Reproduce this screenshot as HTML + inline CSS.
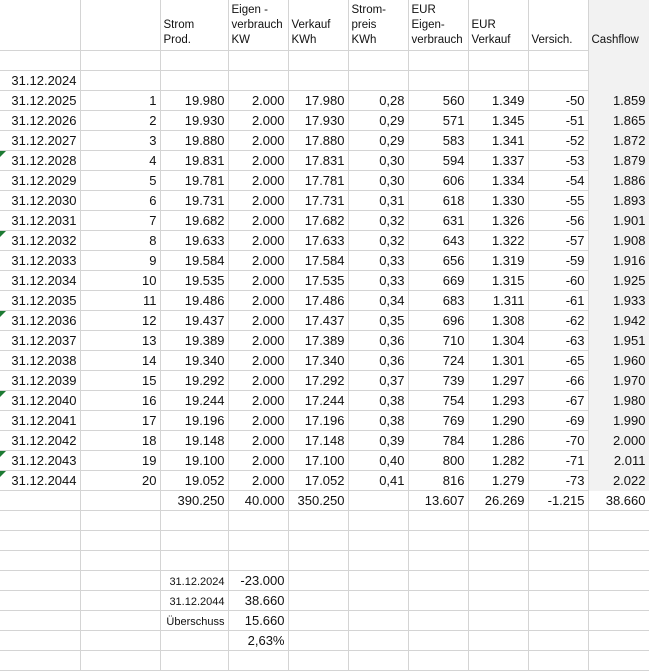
<!DOCTYPE html>
<html><head><meta charset="utf-8"><style>
body{margin:0;background:#fff;font-family:"Liberation Sans",Arial,sans-serif;color:#111;}
table{border-collapse:collapse;table-layout:fixed;position:absolute;left:0;top:0;width:649px;}
td{border-right:1px solid #d4d4d4;border-bottom:1px solid #d4d4d4;height:19px;padding:0 3px 0 0;font-size:13px;text-align:right;white-space:nowrap;overflow:hidden;line-height:19px;vertical-align:bottom}
tr.h td{height:48px;font-size:11.5px;text-align:left;line-height:15px;padding:0 0 2px 3px;vertical-align:bottom}
td.g{background:#f2f2f2;border-right-color:#f2f2f2;border-bottom-color:#f2f2f2}
td.s{font-size:11px;line-height:16px}
.t{position:relative}
.t:before{content:"";position:absolute;left:0;top:0;border-top:6px solid #1e7b34;border-right:6px solid transparent}
</style></head><body>
<table>
<colgroup><col style="width:80px"><col style="width:80px"><col style="width:68px"><col style="width:60px"><col style="width:60px"><col style="width:60px"><col style="width:60px"><col style="width:60px"><col style="width:60px"><col style="width:61px"></colgroup>
<tr class="h"><td></td><td></td><td>Strom<br>Prod.</td><td>Eigen -<br>verbrauch<br>KW</td><td>Verkauf<br>KWh</td><td>Strom-<br>preis<br>KWh</td><td>EUR<br>Eigen-<br>verbrauch</td><td>EUR<br>Verkauf</td><td>Versich.</td><td class="g">Cashflow</td></tr>
<tr><td></td><td></td><td></td><td></td><td></td><td></td><td></td><td></td><td></td><td class="g"></td></tr>
<tr><td>31.12.2024</td><td></td><td></td><td></td><td></td><td></td><td></td><td></td><td></td><td class="g"></td></tr>
<tr><td>31.12.2025</td><td>1</td><td>19.980</td><td>2.000</td><td>17.980</td><td>0,28</td><td>560</td><td>1.349</td><td>-50</td><td class="g">1.859</td></tr>
<tr><td>31.12.2026</td><td>2</td><td>19.930</td><td>2.000</td><td>17.930</td><td>0,29</td><td>571</td><td>1.345</td><td>-51</td><td class="g">1.865</td></tr>
<tr><td>31.12.2027</td><td>3</td><td>19.880</td><td>2.000</td><td>17.880</td><td>0,29</td><td>583</td><td>1.341</td><td>-52</td><td class="g">1.872</td></tr>
<tr><td class="t">31.12.2028</td><td>4</td><td>19.831</td><td>2.000</td><td>17.831</td><td>0,30</td><td>594</td><td>1.337</td><td>-53</td><td class="g">1.879</td></tr>
<tr><td>31.12.2029</td><td>5</td><td>19.781</td><td>2.000</td><td>17.781</td><td>0,30</td><td>606</td><td>1.334</td><td>-54</td><td class="g">1.886</td></tr>
<tr><td>31.12.2030</td><td>6</td><td>19.731</td><td>2.000</td><td>17.731</td><td>0,31</td><td>618</td><td>1.330</td><td>-55</td><td class="g">1.893</td></tr>
<tr><td>31.12.2031</td><td>7</td><td>19.682</td><td>2.000</td><td>17.682</td><td>0,32</td><td>631</td><td>1.326</td><td>-56</td><td class="g">1.901</td></tr>
<tr><td class="t">31.12.2032</td><td>8</td><td>19.633</td><td>2.000</td><td>17.633</td><td>0,32</td><td>643</td><td>1.322</td><td>-57</td><td class="g">1.908</td></tr>
<tr><td>31.12.2033</td><td>9</td><td>19.584</td><td>2.000</td><td>17.584</td><td>0,33</td><td>656</td><td>1.319</td><td>-59</td><td class="g">1.916</td></tr>
<tr><td>31.12.2034</td><td>10</td><td>19.535</td><td>2.000</td><td>17.535</td><td>0,33</td><td>669</td><td>1.315</td><td>-60</td><td class="g">1.925</td></tr>
<tr><td>31.12.2035</td><td>11</td><td>19.486</td><td>2.000</td><td>17.486</td><td>0,34</td><td>683</td><td>1.311</td><td>-61</td><td class="g">1.933</td></tr>
<tr><td class="t">31.12.2036</td><td>12</td><td>19.437</td><td>2.000</td><td>17.437</td><td>0,35</td><td>696</td><td>1.308</td><td>-62</td><td class="g">1.942</td></tr>
<tr><td>31.12.2037</td><td>13</td><td>19.389</td><td>2.000</td><td>17.389</td><td>0,36</td><td>710</td><td>1.304</td><td>-63</td><td class="g">1.951</td></tr>
<tr><td>31.12.2038</td><td>14</td><td>19.340</td><td>2.000</td><td>17.340</td><td>0,36</td><td>724</td><td>1.301</td><td>-65</td><td class="g">1.960</td></tr>
<tr><td>31.12.2039</td><td>15</td><td>19.292</td><td>2.000</td><td>17.292</td><td>0,37</td><td>739</td><td>1.297</td><td>-66</td><td class="g">1.970</td></tr>
<tr><td class="t">31.12.2040</td><td>16</td><td>19.244</td><td>2.000</td><td>17.244</td><td>0,38</td><td>754</td><td>1.293</td><td>-67</td><td class="g">1.980</td></tr>
<tr><td>31.12.2041</td><td>17</td><td>19.196</td><td>2.000</td><td>17.196</td><td>0,38</td><td>769</td><td>1.290</td><td>-69</td><td class="g">1.990</td></tr>
<tr><td>31.12.2042</td><td>18</td><td>19.148</td><td>2.000</td><td>17.148</td><td>0,39</td><td>784</td><td>1.286</td><td>-70</td><td class="g">2.000</td></tr>
<tr><td class="t">31.12.2043</td><td>19</td><td>19.100</td><td>2.000</td><td>17.100</td><td>0,40</td><td>800</td><td>1.282</td><td>-71</td><td class="g">2.011</td></tr>
<tr><td class="t">31.12.2044</td><td>20</td><td>19.052</td><td>2.000</td><td>17.052</td><td>0,41</td><td>816</td><td>1.279</td><td>-73</td><td class="g">2.022</td></tr>
<tr><td></td><td></td><td>390.250</td><td>40.000</td><td>350.250</td><td></td><td>13.607</td><td>26.269</td><td>-1.215</td><td>38.660</td></tr>
<tr><td></td><td></td><td></td><td></td><td></td><td></td><td></td><td></td><td></td><td></td></tr>
<tr><td></td><td></td><td></td><td></td><td></td><td></td><td></td><td></td><td></td><td></td></tr>
<tr><td></td><td></td><td></td><td></td><td></td><td></td><td></td><td></td><td></td><td></td></tr>
<tr><td></td><td></td><td class="s">31.12.2024</td><td>-23.000</td><td></td><td></td><td></td><td></td><td></td><td></td></tr>
<tr><td></td><td></td><td class="s">31.12.2044</td><td>38.660</td><td></td><td></td><td></td><td></td><td></td><td></td></tr>
<tr><td></td><td></td><td class="s">Überschuss</td><td>15.660</td><td></td><td></td><td></td><td></td><td></td><td></td></tr>
<tr><td></td><td></td><td></td><td>2,63%</td><td></td><td></td><td></td><td></td><td></td><td></td></tr>
<tr><td></td><td></td><td></td><td></td><td></td><td></td><td></td><td></td><td></td><td></td></tr>
</table>
</body></html>
